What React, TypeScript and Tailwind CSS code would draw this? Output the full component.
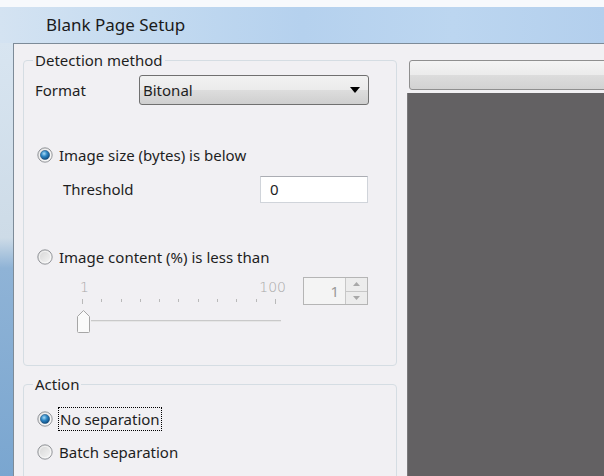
import React from 'react';

const font = { fontFamily: '"Noto Sans", "Open Sans", Arial, sans-serif' };

function Radio({ checked }: { checked?: boolean }) {
  return (
    <svg width="16" height="16" viewBox="0 0 16 16" className="shrink-0">
      <defs>
        <linearGradient id="rg-off" x1="0" y1="0" x2="1" y2="1">
          <stop offset="0" stopColor="#d4d4d4" />
          <stop offset="1" stopColor="#f7f7f7" />
        </linearGradient>
        <radialGradient id="rg-dot" cx="0.4" cy="0.35" r="0.7">
          <stop offset="0" stopColor="#a9dcf7" />
          <stop offset="0.45" stopColor="#2d86c4" />
          <stop offset="1" stopColor="#0b4578" />
        </radialGradient>
      </defs>
      <circle cx="8" cy="8" r="7.2" fill="url(#rg-off)" stroke="#8c8f94" strokeWidth="0.9" />
      <circle cx="8" cy="8" r="5.6" fill="none" stroke="#ffffff" strokeOpacity="0.7" strokeWidth="0.8" />
      {checked && <circle cx="8" cy="8" r="4.6" fill="url(#rg-dot)" stroke="#1c4f7a" strokeWidth="0.5" />}
    </svg>
  );
}

function Group({ title, className, children }: { title: string; className?: string; children: React.ReactNode }) {
  return (
    <fieldset className={`shrink-0 border border-[#d5dde3] rounded-[4px] pl-[11px] ${className ?? ''}`}>
      <legend className="px-[2px] -ml-[2px] text-[15px] leading-[19px] text-[#1e1e1e]">{title}</legend>
      {children}
    </fieldset>
  );
}

function Slider() {
  const ticks = Array.from({ length: 11 }, (_, i) => i);
  return (
    <div className="w-[210px] ml-[41px] flex flex-col">
      <div className="flex justify-between h-[20px] text-[14px] leading-[20px] text-[#a9a9a9] pl-[4px]" style={{ fontFamily: '"DejaVu Sans", sans-serif', fontWeight: 300 }}>
        <span>1</span>
        <span>100</span>
      </div>
      <div className="flex justify-between ml-[6px] mr-[10px] mt-[2px] h-[5px] items-start">
        {ticks.map((t) => (
          <div key={t} className={`w-px bg-[#b9b9b9] ${t === 0 || t === 10 ? 'h-[5px]' : 'h-[3px]'}`} />
        ))}
      </div>
      <div className="flex items-center mt-[5px] h-[24px]">
        <svg width="15" height="24" viewBox="0 0 15 24" className="shrink-0">
          <path d="M1.5 22.5 V7.5 L7.5 1.5 L13.5 7.5 V22.5 Q13.5 23.5 12.5 23.5 H2.5 Q1.5 23.5 1.5 22.5 Z" fill="#fafafa" stroke="#a6a6a6" strokeWidth="1" />
        </svg>
        <div className="flex-1 h-[2px] bg-[#c9c9c9] mr-[5px] border-b border-[#e6e6e6]" />
      </div>
    </div>
  );
}

function SpinBox() {
  return (
    <div className="ml-[17px] w-[65px] h-[28px] border border-[#b5b5b5] bg-[#f4f4f4] flex">
      <div className="flex-1 text-right pr-[6px] text-[15px] leading-[26px] text-[#9a9a9a]">1</div>
      <div className="w-[22px] flex flex-col border-l border-[#c7c7c7]">
        <div className="flex-1 flex items-center justify-center border-b border-[#c7c7c7] bg-[#ececec]">
          <svg width="7" height="4" viewBox="0 0 7 4"><path d="M0 4 L3.5 0 L7 4 Z" fill="#a8a8a8" /></svg>
        </div>
        <div className="flex-1 flex items-center justify-center bg-[#ececec]">
          <svg width="7" height="4" viewBox="0 0 7 4"><path d="M0 0 L3.5 4 L7 0 Z" fill="#a8a8a8" /></svg>
        </div>
      </div>
    </div>
  );
}

export default function App() {
  return (
    <div className="w-[604px] h-[476px] overflow-hidden bg-white flex flex-col text-[#1e1e1e]" style={font}>
      <div className="h-[7px] bg-[#f7f9fc] shrink-0" />
      <div className="h-[36px] shrink-0 flex items-center pl-[46px] bg-[linear-gradient(90deg,#d4e3f2_0%,#c3daf0_25%,#b5d1ee_50%,#bcd6f0_75%,#b3cfed_100%)]">
        <span className="text-[17px] text-[#1a1a1a]">Blank Page Setup</span>
      </div>
      <div className="flex flex-1 min-h-0">
        <div className="w-[13px] shrink-0 bg-[linear-gradient(180deg,#d8e5f1_0%,#cddbe7_45%,#8fb3d6_52%,#7aa6d0_100%)]" />
        <div className="flex-1 flex border-l border-t border-[#7d8b98] bg-[#f1f0f3] pt-[7px] pl-[9px]">
          <div className="w-[374px] shrink-0 flex flex-col">
            <Group title="Detection method" className="h-[315px]">
              <div className="flex items-center mt-[5px]">
                <span className="w-[104px] text-[15px]">Format</span>
                <div className="w-[230px] h-[30px] rounded-[3px] border border-[#707070] bg-[linear-gradient(180deg,#f2f2f2_0%,#ebebeb_50%,#dddddd_51%,#cfcfcf_100%)] flex items-center justify-between pl-[3px] pr-[8px]">
                  <span className="text-[15px]">Bitonal</span>
                  <svg width="10" height="6" viewBox="0 0 10 6"><path d="M0 0 H10 L5 6 Z" fill="#000" /></svg>
                </div>
              </div>
              <div className="flex items-center gap-[6px] h-[20px] mt-[40px] ml-[2px]">
                <Radio checked />
                <span className="text-[15px]">Image size (bytes) is below</span>
              </div>
              <div className="flex items-center mt-[11px] pl-[28px]">
                <span className="w-[197px] text-[15px]">Threshold</span>
                <div className="w-[108px] h-[27px] bg-white border border-[#d0d4da] border-t-[#abadb3] text-[15px] leading-[25px] pl-[9px]">0</div>
              </div>
              <div className="flex items-center gap-[6px] h-[20px] mt-[44px] ml-[2px]">
                <Radio />
                <span className="text-[15px]">Image content (%) is less than</span>
              </div>
              <div className="flex items-start mt-[10px]">
                <Slider />
                <SpinBox />
              </div>
            </Group>
            <Group title="Action" className="mt-[9px] h-[120px]">
              <div className="flex items-center gap-[5px] h-[20px] mt-[15px] ml-[2px]">
                <Radio checked />
                <span className="text-[15px] leading-[22px] border border-dotted border-black px-px">No separation</span>
              </div>
              <div className="flex items-center gap-[6px] h-[20px] mt-[13px] ml-[2px]">
                <Radio />
                <span className="text-[15px]">Batch separation</span>
              </div>
            </Group>
          </div>
          <div className="flex-1 ml-[10px] mt-[9px] flex flex-col">
            <div className="h-[30px] ml-[2px] -mr-[4px] rounded-[3px] border border-[#8f8f8f] bg-[linear-gradient(180deg,#f4f4f4_0%,#ebebeb_50%,#dcdcdc_51%,#d2d2d2_100%)]" />
            <div className="flex-1 mt-[3px] bg-[#636163] border-l border-[#7a797b]" />
          </div>
        </div>
      </div>
    </div>
  );
}
